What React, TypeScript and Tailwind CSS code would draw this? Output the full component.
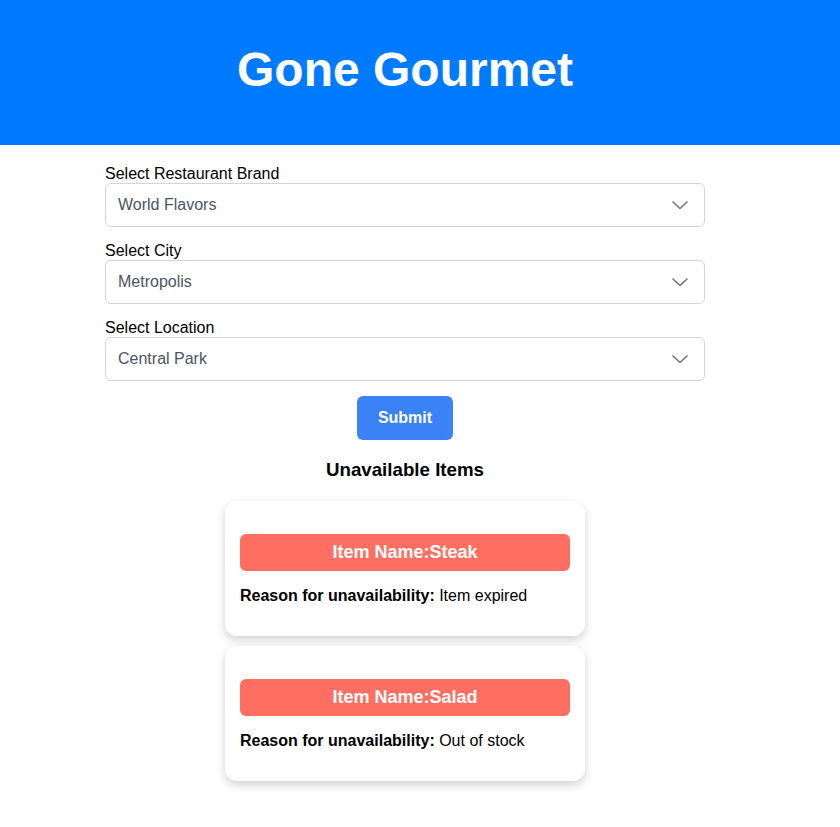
import React from 'react';

const font = { fontFamily: '"Liberation Sans", Arial, sans-serif' };

function Chevron() {
  return (
    <svg width="16" height="10" viewBox="0 0 16 10" fill="none" className="shrink-0">
      <polyline points="1,2 8,8.5 15,2" stroke="#6b7280" strokeWidth="1.6" strokeLinecap="round" strokeLinejoin="round" />
    </svg>
  );
}

function SelectField({ label, value }: { label: string; value: string }) {
  return (
    <div className="flex flex-col">
      <label className="text-[16px] leading-[18px] text-black">{label}</label>
      <div className="flex items-center justify-between h-[44px] border border-[#d1d5db] rounded-[6px] pl-[12px] pr-[16px] bg-white">
        <span className="text-[16px] text-[#4b5563]">{value}</span>
        <Chevron />
      </div>
    </div>
  );
}

function ItemCard({ name, reason }: { name: string; reason: string }) {
  return (
    <div className="w-[360px] bg-white rounded-[12px] shadow-[0_4px_10px_rgba(0,0,0,0.18)] px-[15px] pt-[33px] pb-[31px]">
      <div className="h-[37px] flex items-center justify-center bg-[#ff6f61] rounded-[6px] text-white text-[18px] font-bold">
        Item Name:{name}
      </div>
      <p className="mt-[16px] text-[16px] leading-[18px] text-black">
        <span className="font-bold">Reason for unavailability:</span> {reason}
      </p>
    </div>
  );
}

export default function App() {
  return (
    <div className="min-h-[827px] bg-white" style={font}>
      <header className="h-[145px] bg-[#007bff] w-full">
        <div className="w-[810px] h-full flex items-center justify-center">
          <h1 className="text-[48px] font-bold text-white pb-[5px]">Gone Gourmet</h1>
        </div>
      </header>
      <div className="w-[810px] flex flex-col items-center">
        <div className="w-[600px] flex flex-col gap-[15px] pt-[20px]">
          <SelectField label="Select Restaurant Brand" value="World Flavors" />
          <SelectField label="Select City" value="Metropolis" />
          <SelectField label="Select Location" value="Central Park" />
        </div>
        <button className="mt-[15px] w-[96px] h-[44px] bg-[#3b82f6] rounded-[6px] text-white text-[16px] font-bold">
          Submit
        </button>
        <h2 className="mt-[19px] text-[18.72px] leading-[22px] font-bold text-black">Unavailable Items</h2>
        <div className="mt-[20px] flex flex-col gap-[10px]">
          <ItemCard name="Steak" reason="Item expired" />
          <ItemCard name="Salad" reason="Out of stock" />
        </div>
      </div>
    </div>
  );
}
